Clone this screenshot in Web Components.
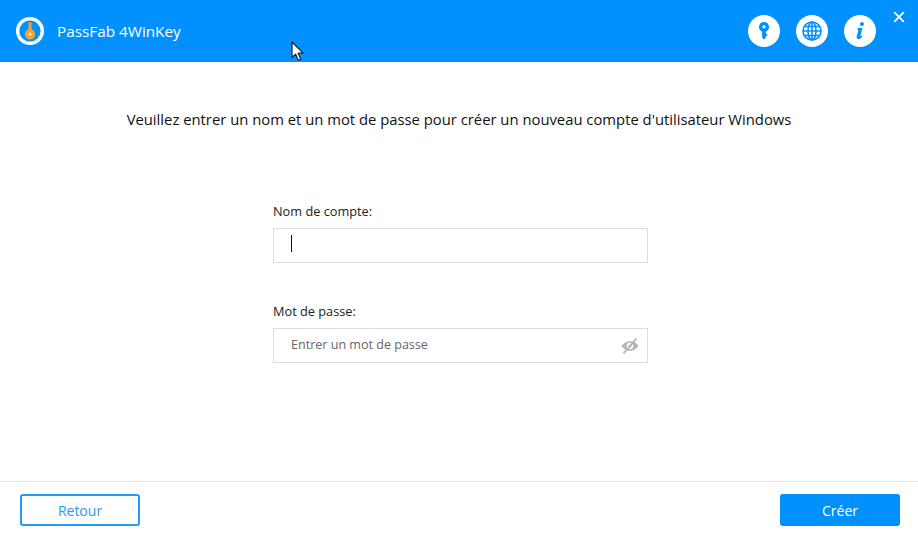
<!DOCTYPE html>
<html lang="fr">
<head>
<meta charset="utf-8">
<title>PassFab 4WinKey</title>
<style>
    html, body { margin: 0; height: 100%; }
    body { font-family: "Open Sans", "Noto Sans", sans-serif; background: #fff; overflow: hidden; }
</style>
</head>
<body>
<app-window>
    <app-header slot="header" title="PassFab 4WinKey">
        <round-icon name="key"></round-icon>
        <round-icon name="globe"></round-icon>
        <round-icon name="info"></round-icon>
    </app-header>
    <account-form heading="Veuillez entrer un nom et un mot de passe pour créer un nouveau compte d'utilisateur Windows">
        <text-field label="Nom de compte:" focused></text-field>
        <text-field label="Mot de passe:" placeholder="Entrer un mot de passe" eye></text-field>
    </account-form>
    <app-footer slot="footer">
        <app-button slot="left" outline>Retour</app-button>
        <app-button slot="right">Créer</app-button>
    </app-footer>
</app-window>

<script>
const ICONS = {
    key: `<path fill-rule="evenodd" d="M16 7a5 5 0 0 1 1.9 9.6v2.2h1.4v2h-1.4v1.8L16 24.4l-1.9-1.8v-6A5 5 0 0 1 16 7zm0 3.2a1.6 1.6 0 1 0 0 3.2 1.6 1.6 0 0 0 0-3.2z" fill="#0091ff"/>`,
    globe: `<g fill="none" stroke="#0091ff" stroke-width="1.6">
              <circle cx="16" cy="16" r="9"/>
              <ellipse cx="16" cy="16" rx="4" ry="9"/>
              <path d="M16 7v18M7 16h18M8.4 11.5h15.2M8.4 20.5h15.2"/>
            </g>`,
    info: `<circle cx="18" cy="9" r="2" fill="#0091ff"/>
           <path d="M13.6 13h4.8l-2 7.8c-.2.8.4 1 1.6-.3l.6.7c-1.4 2-2.8 2.8-4.2 2.8-1.5 0-2-1-1.6-2.4l1.4-6c.2-.8-.1-1-1-1z" fill="#0091ff"/>`
};

class AppWindow extends HTMLElement {
    constructor() {
        super();
        this.attachShadow({mode: 'open'}).innerHTML = `
            <style>
                :host { display: flex; flex-direction: column; width: 918px; height: 535px; position: relative; }
                main { flex: 1; min-height: 0; }
                svg { position: absolute; left: 291px; top: 41px; }
            </style>
            <slot name="header"></slot>
            <main><slot></slot></main>
            <slot name="footer"></slot>
            <svg width="14" height="21" viewBox="0 0 14 21">
                <path d="M1 1v15.5l3.6-3.4 2.6 6.2 2.6-1.1-2.6-6h4.9z" fill="#fff" stroke="#10243a" stroke-width="1.2" stroke-linejoin="round"/>
            </svg>
        `;
    }
}

class AppHeader extends HTMLElement {
    constructor() {
        super();
        this.attachShadow({mode: 'open'}).innerHTML = `
            <style>
                :host { display: flex; align-items: center; height: 62px; background: #0091ff; color: #fff; position: relative; padding: 0 42px 0 16px; box-sizing: border-box; }
                .logo { width: 28px; height: 28px; margin-right: 13px; flex: none; }
                .title { font-size: 15.3px; font-weight: 400; flex: 1; }
                .icons { display: flex; gap: 16px; }
                .close { position: absolute; right: 13px; top: 11px; width: 12px; height: 12px; }
            </style>
            <svg class="logo" viewBox="0 0 28 28">
                <circle cx="14" cy="14" r="12.3" fill="#0091ff" stroke="#fff" stroke-width="3.4"/>
                <rect x="12.4" y="5" width="3.2" height="10" rx="1.6" fill="#f6a032"/>
                <circle cx="14" cy="17.2" r="5.2" fill="#f6a032"/>
                <circle cx="14" cy="17.2" r="1.6" fill="#ffe3b5"/>
            </svg>
            <span class="title"></span>
            <div class="icons"><slot></slot></div>
            <svg class="close" viewBox="0 0 12 12"><path d="M1.2 1.2l9.6 9.6M10.8 1.2l-9.6 9.6" stroke="#fff" stroke-width="1.8" fill="none"/></svg>
        `;
        this.shadowRoot.querySelector('.title').textContent = this.getAttribute('title');
    }
}

class RoundIcon extends HTMLElement {
    constructor() {
        super();
        this.attachShadow({mode: 'open'}).innerHTML = `
            <style>
                :host { display: block; width: 32px; height: 32px; }
                svg { display: block; }
            </style>
            <svg width="32" height="32" viewBox="0 0 32 32">
                <circle cx="16" cy="16" r="16" fill="#fff"/>
                ${ICONS[this.getAttribute('name')]}
            </svg>
        `;
    }
}

class AccountForm extends HTMLElement {
    constructor() {
        super();
        this.attachShadow({mode: 'open'}).innerHTML = `
            <style>
                :host { display: block; }
                h1 { margin: 0; padding-top: 47px; height: 20px; line-height: 20px; font-size: 14.82px; font-weight: 400; color: #111; text-align: center; white-space: nowrap; }
                .fields { display: flex; flex-direction: column; gap: 38px; width: 375px; margin: 72px auto 0 273px; }
            </style>
            <h1></h1>
            <div class="fields"><slot></slot></div>
        `;
        this.shadowRoot.querySelector('h1').textContent = this.getAttribute('heading');
    }
}

class TextField extends HTMLElement {
    constructor() {
        super();
        const placeholder = this.getAttribute('placeholder') || '';
        this.attachShadow({mode: 'open'}).innerHTML = `
            <style>
                :host { display: block; }
                label { display: block; height: 20px; line-height: 20px; font-size: 12.75px; color: #222; margin-bottom: 7px; }
                .box { display: flex; align-items: center; height: 35px; box-sizing: border-box; border: 1px solid #dcdcdc; padding: 0 7px 2px 17px; }
                .ph { flex: 1; font-size: 12.55px; color: #666; }
                .caret { width: 1px; height: 17px; background: #111; margin-bottom: 2px; }
                svg { flex: none; position: relative; top: 1px; }
            </style>
            <label></label>
            <div class="box">
                ${this.hasAttribute('focused') ? '<span class="caret"></span>' : ''}
                ${placeholder ? '<span class="ph"></span>' : ''}
                ${this.hasAttribute('eye') ? `
                <svg width="20" height="18" viewBox="0 0 20 18">
                    <path d="M1.5 9c2.2-3.2 5-4.8 8.5-4.8s6.300 1.600 8.500 4.800c-2.200 3.200-5 4.800-8.500 4.800S3.700 12.200 1.500 9z" fill="#b4b4b4"/>
                    <circle cx="10" cy="9" r="3.300" fill="#fff"/>
                    <circle cx="10" cy="9" r="1.500" fill="#b4b4b4"/>
                    <path d="M3.500 16.500L16.500 1.500" stroke="#b4b4b4" stroke-width="1.800"/>
                </svg>` : ''}
            </div>
        `;
        this.shadowRoot.querySelector('label').textContent = this.getAttribute('label');
        if (placeholder) this.shadowRoot.querySelector('.ph').textContent = placeholder;
    }
}

class AppFooter extends HTMLElement {
    constructor() {
        super();
        this.attachShadow({mode: 'open'}).innerHTML = `
            <style>
                :host { display: flex; justify-content: space-between; align-items: flex-start; height: 54px; box-sizing: border-box; border-top: 1px solid #e6e6e6; padding: 12px 18px 0 20px; }
            </style>
            <slot name="left"></slot>
            <slot name="right"></slot>
        `;
    }
}

class AppButton extends HTMLElement {
    constructor() {
        super();
        this.attachShadow({mode: 'open'}).innerHTML = `
            <style>
                :host { display: flex; align-items: center; justify-content: center; width: 120px; height: 32px; box-sizing: border-box; border-radius: 3px; background: #0091ff; color: #fff; font-size: 14px; }
                :host([outline]) { background: #fff; color: #2a97f5; border: 2px solid #1f9bff; }
            </style>
            <slot></slot>
        `;
    }
}

customElements.define('app-window', AppWindow);
customElements.define('app-header', AppHeader);
customElements.define('round-icon', RoundIcon);
customElements.define('account-form', AccountForm);
customElements.define('text-field', TextField);
customElements.define('app-footer', AppFooter);
customElements.define('app-button', AppButton);
</script>
</body>
</html>
